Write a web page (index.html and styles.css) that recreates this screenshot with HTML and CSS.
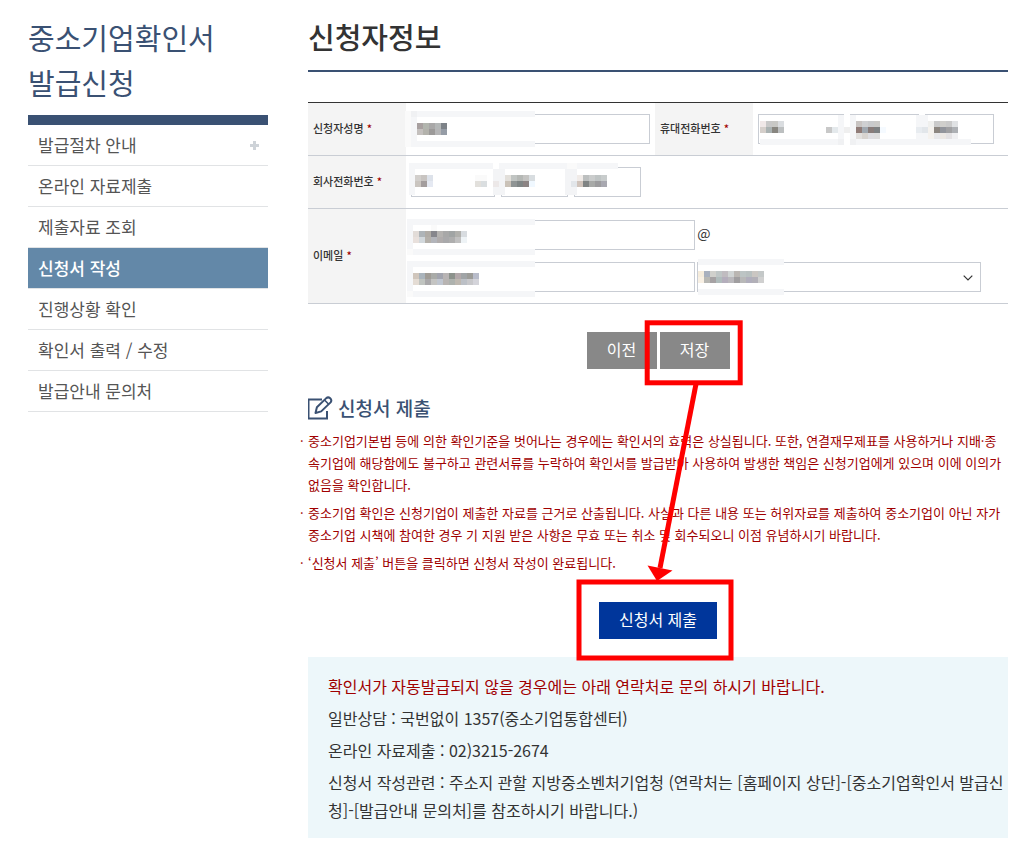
FILE: index.html
```html
<!DOCTYPE html>
<html lang="ko">
<head>
    <meta charset="UTF-8">
    <meta name="viewport" content="width=device-width, initial-scale=1.0">
    <title>신청서 작성 | 중소기업확인서 발급신청</title>
    <link rel="stylesheet" href="styles.css">
</head>
<body>
    <div class="page">
        <aside class="sidebar">
            <h2 class="sidebar-title">중소기업확인서<br>발급신청</h2>
            <nav>
                <ul class="menu">
                    <li><a href="#">발급절차 안내
                        <svg class="plus" width="9" height="9" viewBox="0 0 9 9" aria-hidden="true"><path d="M3 0h3v3h3v3H6v3H3V6H0V3h3z" fill="#ced3d8"/></svg>
                    </a></li>
                    <li><a href="#">온라인 자료제출</a></li>
                    <li><a href="#">제출자료 조회</a></li>
                    <li><a href="#" class="active" aria-current="page">신청서 작성</a></li>
                    <li><a href="#">진행상황 확인</a></li>
                    <li><a href="#">확인서 출력 / 수정</a></li>
                    <li><a href="#">발급안내 문의처</a></li>
                </ul>
            </nav>
        </aside>

        <main class="content">
            <h1 class="content-title">신청자정보</h1>

            <form id="applicantForm">
                <table class="form-table">
                    <colgroup>
                        <col class="col-label">
                        <col class="col-name">
                        <col class="col-label">
                        <col>
                    </colgroup>
                    <tr>
                        <th scope="row"><label for="name">신청자성명 <em>*</em></label></th>
                        <td>
                            <input type="text" id="name" class="field">
                            <svg class="mask" data-mask="name" viewBox="406 103 249 52" width="249" height="52" aria-hidden="true"></svg>
                        </td>
                        <th scope="row"><label for="mobile1">휴대전화번호 <em>*</em></label></th>
                        <td>
                            <div class="phone phone-mobile">
                                <select id="mobile1" class="field"><option></option></select>
                                <input type="text" class="field" aria-label="휴대전화 가운데 자리">
                                <input type="text" class="field" aria-label="휴대전화 끝자리">
                            </div>
                            <svg class="mask" data-mask="mobile" viewBox="753 103 255 52" width="255" height="52" aria-hidden="true"></svg>
                        </td>
                    </tr>
                    <tr>
                        <th scope="row"><label for="tel1">회사전화번호 <em>*</em></label></th>
                        <td colspan="3">
                            <div class="phone">
                                <select id="tel1" class="field"><option></option></select>
                                <input type="text" class="field" aria-label="회사전화 가운데 자리">
                                <input type="text" class="field" aria-label="회사전화 끝자리">
                            </div>
                            <svg class="mask" data-mask="tel" viewBox="406 156 602 52" width="602" height="52" aria-hidden="true"></svg>
                        </td>
                    </tr>
                    <tr>
                        <th scope="row"><label for="email">이메일 <em>*</em></label></th>
                        <td colspan="3">
                            <div class="email">
                                <input type="text" id="email" class="field">
                                <span class="at">@</span>
                                <input type="text" class="field" aria-label="이메일 도메인">
                                <div class="select-wrap">
                                    <select class="field" aria-label="도메인 선택"><option></option></select>
                                    <svg class="chevron" width="10" height="6" viewBox="0 0 10 6" aria-hidden="true"><path d="M.7 .7L5 5 9.300 .7" fill="none" stroke="#333" stroke-width="1.200"/></svg>
                                </div>
                            </div>
                            <svg class="mask" data-mask="email" viewBox="406 209 602 94" width="602" height="94" aria-hidden="true"></svg>
                        </td>
                    </tr>
                </table>
                <div class="buttons">
                    <button type="button" class="btn">이전</button>
                    <button type="submit" class="btn">저장</button>
                </div>
            </form>

            <h3 class="section-title">
                <svg width="26" height="24" viewBox="1 0 26 24" fill="none" stroke="#3a5173" stroke-width="2" aria-hidden="true">
                    <path d="M15 3.500H1.500V22.500H20V15"/>
                    <path d="M8.500 17l1.400-5.800L19.300 2.100q1.900-1.500 3.900.2 2 2 .4 4.100l-9.400 9z" stroke-linejoin="round"/>
                    <path d="M17.500 4l4.200 4.200" stroke-width="1.600"/>
                </svg>
                신청서 제출
            </h3>
            <ul class="notice">
                <li>중소기업기본법 등에 의한 확인기준을 벗어나는 경우에는 확인서의 효력은 상실됩니다. 또한, 연결재무제표를 사용하거나 지배·종속기업에 해당함에도 불구하고 관련서류를 누락하여 확인서를 발급받아 사용하여 발생한 책임은 신청기업에게 있으며 이에 이의가 없음을 확인합니다.</li>
                <li>중소기업 확인은 신청기업이 제출한 자료를 근거로 산출됩니다. 사실과 다른 내용 또는 허위자료를 제출하여 중소기업이 아닌 자가 중소기업 시책에 참여한 경우 기 지원 받은 사항은 무효 또는 취소 및 회수되오니 이점 유념하시기 바랍니다.</li>
                <li>‘신청서 제출’ 버튼을 클릭하면 신청서 작성이 완료됩니다.</li>
            </ul>
            <div class="submit-row">
                <button type="button" class="btn btn-primary">신청서 제출</button>
            </div>

            <div class="contact">
                <p class="contact-lead">확인서가 자동발급되지 않을 경우에는 아래 연락처로 문의 하시기 바랍니다.</p>
                <p>일반상담 : 국번없이 1357(중소기업통합센터)</p>
                <p>온라인 자료제출 : 02)3215-2674</p>
                <p>신청서 작성관련 : 주소지 관할 지방중소벤처기업청 (연락처는 [홈페이지 상단]-[중소기업확인서 발급신청]-[발급안내 문의처]를 참조하시기 바랍니다.)</p>
            </div>

            <!-- 저장 -> 신청서 제출 순서 안내 -->
            <svg class="guide" width="700" height="848" viewBox="308 15 700 848" fill="none" stroke="#f00" stroke-width="5" aria-hidden="true">
                <rect x="647.200" y="322.800" width="93" height="60"/>
                <rect x="579" y="582" width="152" height="76"/>
                <path d="M696 384L660 568"/>
                <path d="M647.500 565.500L672.500 570.500L657 581z" fill="#f00" stroke="none"/>
            </svg>
        </main>
    </div>
    <script src="script.js"></script>
</body>
</html>
```
FILE: styles.css
```css
:root {
    --navy: #3a5173;
    --line: #c9cdd4;
    --text: #333333;
    --red: #a00000;
}

* {
    margin: 0;
    padding: 0;
    box-sizing: border-box;
}

body {
    background: #ffffff;
    color: var(--text);
    font-family: "Noto Sans CJK KR", "Noto Sans", sans-serif;
    font-size: 16px;
}

.page {
    display: flex;
    gap: 40px;
    padding: 15px 21px 10px 28px;
}

/* 왼쪽 메뉴 */
.sidebar {
    flex: 0 0 240px;
}

.sidebar-title {
    padding-bottom: 10px;
    border-bottom: 10px solid var(--navy);
    color: var(--navy);
    font-size: 29px;
    font-weight: 400;
    line-height: 45px;
}

.menu {
    list-style: none;
}

.menu li {
    border-bottom: 1px solid #e1e3e5;
}

.menu a {
    display: flex;
    justify-content: space-between;
    align-items: center;
    padding: 0 9px 0 10px;
    color: #555555;
    font-size: 17px;
    line-height: 40px;
    text-decoration: none;
}

.menu a.active {
    background: #6388a8;
    color: #ffffff;
    font-weight: 500;
}

/* 본문 */
.content {
    position: relative;
    flex: 1;
    min-width: 0;
}

.content-title {
    margin-bottom: 30px;
    padding-bottom: 12px;
    border-bottom: 2px solid var(--navy);
    font-size: 29px;
    font-weight: 500;
    line-height: 43px;
}

.form-table {
    width: 100%;
    table-layout: fixed;
    border-spacing: 0;
    border-top: 1px solid #333333;
    font-size: 12px;
}

.col-label {
    width: 98px;
}

.col-name {
    width: 249px;
}

.form-table th,
.form-table td {
    border-bottom: 1px solid var(--line);
    text-align: left;
}

.form-table th {
    padding: 0 5px 2px;
    background: #f4f4f4;
    font-size: 11px;
    font-weight: 500;
    white-space: nowrap;
}

.form-table th em {
    color: var(--red);
    font-style: normal;
}

.form-table td {
    position: relative;
    padding: 11px 5px;
}

.field {
    display: block;
    width: 100%;
    height: 30px;
    min-width: 0;
    padding: 0 8px;
    border: 1px solid var(--line);
    border-radius: 0;
    background: #ffffff;
    font: inherit;
    appearance: none;
}

.phone {
    display: grid;
    grid-template-columns: 5fr 4fr 4fr;
    gap: 6px;
    width: 230px;
}

.phone-mobile {
    width: 236px;
}

.email {
    display: grid;
    grid-template-columns: 48% 48%;
    column-gap: 2px;
    row-gap: 12px;
}

.at {
    font-size: 14px;
    line-height: 26px;
}

.select-wrap {
    position: relative;
}

.chevron {
    position: absolute;
    top: 13px;
    right: 8px;
}

/* 개인정보 가림 */
.mask {
    position: absolute;
    top: 0;
    left: 0;
    overflow: visible;
    pointer-events: none;
    shape-rendering: crispEdges;
}

.buttons,
.submit-row {
    display: flex;
    justify-content: center;
    gap: 3px;
    margin-top: 28px;
}

.btn {
    min-width: 70px;
    height: 37px;
    padding: 0 20px 3px;
    border: none;
    background: #888888;
    color: #ffffff;
    font-family: inherit;
    font-size: 16px;
    cursor: pointer;
}

.btn-primary {
    background: #00369b;
}

.section-title {
    display: flex;
    align-items: center;
    gap: 4px;
    margin-top: 24px;
    color: var(--navy);
    font-size: 19px;
    font-weight: 500;
    line-height: 30px;
}

.notice {
    display: grid;
    gap: 6px;
    margin: 7px 0 0 -8px;
    list-style: none;
    color: var(--red);
    font-size: 13px;
    line-height: 22px;
    word-break: break-all;
}

.notice li {
    display: flex;
}

.notice li::before {
    content: "·";
    flex: 0 0 8px;
}

.contact {
    display: grid;
    gap: 4px;
    margin-top: 18px;
    padding: 15px 4px 14px 20px;
    background: #edf7fa;
    font-size: 16px;
    line-height: 28px;
    word-break: break-all;
}

.contact-lead {
    color: var(--red);
}

.guide {
    position: absolute;
    top: 0;
    left: 0;
    overflow: visible;
    pointer-events: none;
}
```
FILE: script.js
```js
// 가림 처리용 모자이크: bands = [x, y, w, h, 색], tiles = [x, y, 색...]
const CELL = 6;
const masks = {
    name: {
        bands: [
            [411, 111, 124, 36, 'f5f6f8'], [405, 111, 6, 36, 'fafafa'], [411, 111, 6, 6, 'f0f1f3'],
            [417, 117, 118, 24, 'ffffff']
        ],
        tiles: [
            [417, 123, 'a8a0a0 b2b5ae a9a8a8 b4b7b7 7d8288'],
            [417, 129, 'c4c0be b3b2ac 9c9a99 b5b5b6 959ca6']
        ]
    },
    mobile: {
        bands: [
            [760, 139, 78, 6, 'f5f6f8'], [838, 115, 6, 24, 'f5f6f8'], [838, 139, 6, 6, 'f0f1f3'],
            [844, 114, 6, 31, 'ffffff'], [850, 115, 6, 24, 'f5f6f8'], [850, 139, 6, 6, 'f0f1f3'],
            [856, 139, 115, 6, 'f5f6f8'], [919, 114, 6, 1, 'ffffff'], [916, 115, 12, 24, 'f5f6f8']
        ],
        tiles: [
            [760, 121, 'f0e8e8 c8c8c8 c8c8c5 dadde0'],
            [760, 127, 'd5cfcb aab2b2 888680 bcbfc0'],
            [826, 127, 'c8c8c8 e4e9ec f5f6f8 efefef'],
            [856, 121, 'c8c4c2 cfd0d2 c8cacc cacac8'],
            [856, 127, '907c78 a0a8b0 887c7a 7c8082 f5faff'],
            [856, 133, 'e2e0de d8d4d0 dedee2 dedede'],
            [916, 127, 'e8ecf0 e2e6ea'],
            [928, 121, 'f0f0ee cacaca d0cfcc cacaca e0e2e4'],
            [928, 127, 'f5f2ee 8c8680 92959c a0a0a2 adb0b4'],
            [928, 133, 'f5f2ee e8e8ea ece8e4 e4e2e4 f0f0f2']
        ]
    },
    tel: {
        bands: [
            [409, 163, 84, 32, 'f5f6f8'], [415, 169, 78, 26, 'ffffff'],
            [493, 163, 6, 6, 'ffffff'], [499, 163, 68, 6, 'f5f6f8'], [493, 169, 12, 26, 'f3f4f6'],
            [505, 169, 60, 26, 'ffffff'], [567, 163, 10, 6, 'fafafa'], [565, 169, 12, 26, 'f3f4f6'],
            [577, 163, 41, 6, 'f5f6f8'], [577, 169, 41, 26, 'ffffff']
        ],
        tiles: [
            [415, 175, 'd2cfcc c8c4c1 dde2ea'],
            [415, 181, 'cac5c0 a39d9d e5e9f2'],
            [475, 175, 'fafafa fafafa'],
            [475, 181, 'e2e0dc dadee0 ffffff ece8e8'],
            [505, 175, 'e2dfda c0c4c2 b5b8b5 c4c4c2 d8dde0'],
            [505, 181, 'cac2b8 8f9494 808686 8c8484 f0f8ff'],
            [571, 181, 'e2e6ea'],
            [577, 175, 'f0ebe8 bcbfbf cacccc bfc4c4 c8cccc'],
            [577, 181, 'd0c4bc 808484 a8aaa8 9c9c9e a8a8b0']
        ]
    },
    email: {
        bands: [
            [407, 219, 128, 36, 'f5f6f8'], [413, 225, 122, 24, 'ffffff'], [407, 249, 6, 6, 'fafafa'],
            [407, 261, 128, 36, 'f5f6f8'], [413, 267, 122, 24, 'ffffff'], [407, 291, 6, 6, 'fafafa'],
            [698, 259, 86, 36, 'f5f6f8'], [698, 265, 86, 24, 'ffffff']
        ],
        tiles: [
            [431, 225, 'fafafa'],
            [413, 231, 'e2dcd8 aeb4b8 b0aca6 86868c b4b2b0 a8a8a8 a0a4a4 b0b0ac d8dce0'],
            [413, 237, 'e8e0dc d2d8dc b4b0aa b2b4ba b0acac a9a9ab aeaeae c0c0c0 eef3f6'],
            [413, 273, 'd0c6bc aab4bc a09c96 a9aba8 a2a4ae b8b4b4 8c928c b2a8aa a0a4a6 9c9c98 b8bcca'],
            [413, 279, 'e4dcd4 c0c4c0 a9a8aa c4c4c2 c0c6d0 b8b4b2 aeb2ae beb8b0 bcc0c6 c8c8cb d4d4da'],
            [698, 271, 'f5ecdc a8b0be d0d0cc bfc6c6 c0bcc0 d0d4d4 bab6b2 bcc4c4 b8c0c0 cac6c2 c4c8c8'],
            [698, 277, 'f8f0e4 b8b8b4 a6a2a4 b0bcbc b4aebc bab8bc a09ea0 b8b8b8 b0aebc b2b0b8 d0d0d0']
        ]
    }
};

function addRect(svg, x, y, w, h, color) {
    const rect = document.createElementNS('http://www.w3.org/2000/svg', 'rect');
    rect.setAttribute('x', x);
    rect.setAttribute('y', y);
    rect.setAttribute('width', w);
    rect.setAttribute('height', h);
    rect.setAttribute('fill', '#' + color);
    svg.appendChild(rect);
}

document.querySelectorAll('.mask').forEach(function(svg) {
    const mask = masks[svg.dataset.mask];
    mask.bands.forEach(b => addRect(svg, ...b));
    mask.tiles.forEach(function([x, y, colors]) {
        colors.split(' ').forEach((color, i) => addRect(svg, x + i * CELL, y, CELL, CELL, color));
    });
});

document.getElementById('applicantForm').addEventListener('submit', function(e) {
    e.preventDefault();
});
```
